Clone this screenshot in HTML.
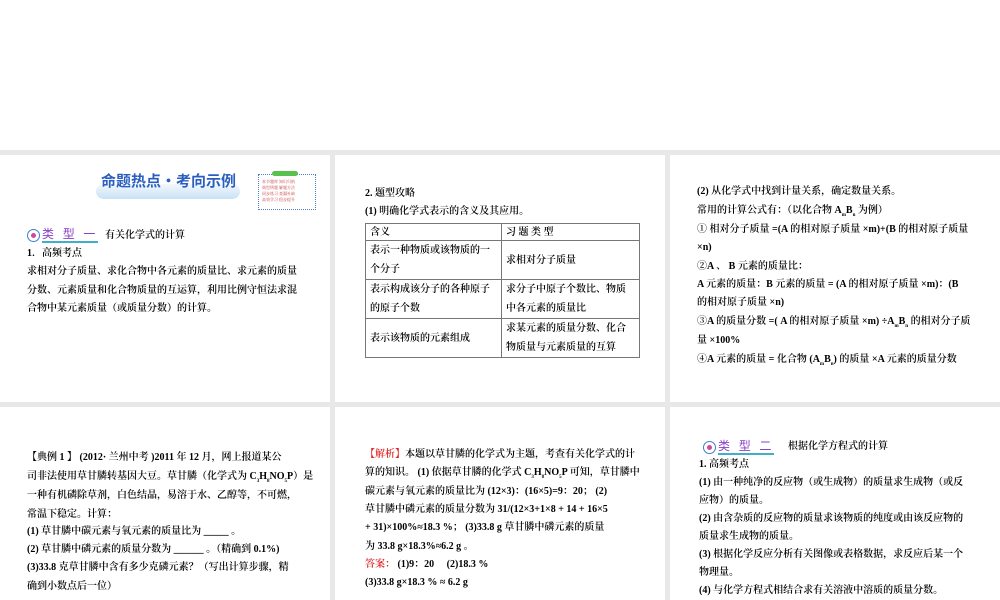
<!DOCTYPE html>
<html><head><meta charset="utf-8"><style>
body{margin:0;width:1000px;height:600px;background:#fff;position:relative;overflow:hidden;font-family:"Liberation Serif","Noto Serif CJK SC",serif;}
.bg{position:absolute;left:0;top:150px;width:1000px;height:450px;background:#e8e8e8;}
.s{position:absolute;background:#fff;}
.l{position:absolute;font-size:10px;color:#000;white-space:nowrap;font-weight:600;line-height:12px;}
table{position:absolute;border-collapse:collapse;font-size:10px;font-weight:600;color:#000;}
td{border:1px solid #777;padding:0 4px;line-height:19px;vertical-align:middle;}
.badge{position:absolute;height:14px;}
.badge .c{position:absolute;left:0;top:0;width:11px;height:11px;border:1.5px solid #3b7fd0;border-radius:50%;background:#fff;}
.badge .c:after{content:"";position:absolute;left:3px;top:3px;width:5px;height:5px;border-radius:50%;background:#d04a9a;}
.badge .t{position:absolute;left:15px;top:-2px;font-size:12px;color:#8a3fc8;font-family:"Noto Sans CJK SC",sans-serif;letter-spacing:3px;white-space:nowrap;border-bottom:2px solid #3fb0c8;line-height:14px;}
.red{color:#d22;}
</style></head><body>
<div class="bg"></div>
<div class="s" style="left:0;top:155px;width:330px;height:247px"></div>
<div class="s" style="left:335px;top:155px;width:330px;height:247px"></div>
<div class="s" style="left:670px;top:155px;width:330px;height:247px"></div>
<div class="s" style="left:0;top:407px;width:330px;height:193px"></div>
<div class="s" style="left:335px;top:407px;width:330px;height:193px"></div>
<div class="s" style="left:670px;top:407px;width:330px;height:193px"></div>

<!-- slide 1 -->
<div style="position:absolute;left:96px;top:184px;width:144px;height:15px;background:linear-gradient(#f2f8fd,#c9e2f5);border-radius:8px;"></div>
<div class="l" style="left:101px;top:172px;font-size:15px;line-height:18px;color:#2a5fc0;font-family:'Noto Sans CJK SC',sans-serif;font-weight:700;">命题热点·考向示例</div>
<div style="position:absolute;left:258px;top:174px;width:56px;height:34px;border:1px dotted #4a7fd0;"></div>
<div style="position:absolute;left:272px;top:171px;width:26px;height:5px;background:#5cc050;border-radius:3px;"></div>
<div class="l" style="left:262px;top:179px;font-size:4px;line-height:6px;color:#c44;font-weight:400;">本节题库 知识归纳<br>典型例题 解题方法<br>同步练习 查漏补缺<br>高效学习 稳步提升</div>
<div class="badge" style="left:27px;top:229px;"><div class="c"></div><div class="t">类 型 一</div></div>
<div class="l" style="left:105px;top:230px;">有关化学式的计算</div>
<div class="l" style="left:27px;top:248px;">1．高频考点</div>
<div class="l" style="left:27px;top:266px;">求相对分子质量、求化合物中各元素的质量比、求元素的质量</div>
<div class="l" style="left:27px;top:285px;">分数、元素质量和化合物质量的互运算，利用比例守恒法求混</div>
<div class="l" style="left:27px;top:303px;">合物中某元素质量（或质量分数）的计算。</div>

<!-- slide 2 -->
<div class="l" style="left:365px;top:188px;">2. 题型攻略</div>
<div class="l" style="left:365px;top:206px;">(1) 明确化学式表示的含义及其应用。</div>
<table style="left:365px;top:223px;width:275px;">
<tr style="height:17px"><td style="width:127px;line-height:15px">含义</td><td style="line-height:15px">习 题 类 型</td></tr>
<tr style="height:39px"><td>表示一种物质或该物质的一个分子</td><td>求相对分子质量</td></tr>
<tr style="height:39px"><td>表示构成该分子的各种原子的原子个数</td><td>求分子中原子个数比、物质中各元素的质量比</td></tr>
<tr style="height:39px"><td>表示该物质的元素组成</td><td>求某元素的质量分数、化合物质量与元素质量的互算</td></tr>
</table>

<!-- slide 3 -->
<div class="l" style="left:697px;top:186px;">(2) 从化学式中找到计量关系，确定数量关系。</div>
<div class="l" style="left:697px;top:205px;">常用的计算公式有：（以化合物 A<sub style="font-size:5px">m</sub>B<sub style="font-size:5px">n</sub> 为例）</div>
<div class="l" style="left:697px;top:224px;">① 相对分子质量 =(A 的相对原子质量 ×m)+(B 的相对原子质量</div>
<div class="l" style="left:697px;top:242px;">×n)</div>
<div class="l" style="left:697px;top:261px;">②A 、 B 元素的质量比：</div>
<div class="l" style="left:697px;top:279px;">A 元素的质量：B 元素的质量 = (A 的相对原子质量 ×m)：(B</div>
<div class="l" style="left:697px;top:297px;">的相对原子质量 ×n)</div>
<div class="l" style="left:697px;top:316px;">③A 的质量分数 =( A 的相对原子质量 ×m) ÷A<sub style="font-size:5px">m</sub>B<sub style="font-size:5px">n</sub> 的相对分子质</div>
<div class="l" style="left:697px;top:335px;">量 ×100%</div>
<div class="l" style="left:697px;top:354px;">④A 元素的质量 = 化合物 (A<sub style="font-size:5px">m</sub>B<sub style="font-size:5px">n</sub>) 的质量 ×A 元素的质量分数</div>

<!-- slide 4 -->
<div class="l" style="left:27px;top:452px;">【典例 1 】 (2012· 兰州中考 )2011 年 12 月，网上报道某公</div>
<div class="l" style="left:27px;top:471px;">司非法使用草甘膦转基因大豆。草甘膦（化学式为 C<sub style="font-size:5px">3</sub>H<sub style="font-size:5px">8</sub>NO<sub style="font-size:5px">5</sub>P）是</div>
<div class="l" style="left:27px;top:490px;">一种有机磷除草剂，白色结晶，易溶于水、乙醇等，不可燃，</div>
<div class="l" style="left:27px;top:509px;">常温下稳定。计算：</div>
<div class="l" style="left:27px;top:526px;">(1) 草甘膦中碳元素与氧元素的质量比为 _____ 。</div>
<div class="l" style="left:27px;top:544px;">(2) 草甘膦中磷元素的质量分数为 ______ 。（精确到 0.1%)</div>
<div class="l" style="left:27px;top:562px;">(3)33.8 克草甘膦中含有多少克磷元素？（写出计算步骤，精</div>
<div class="l" style="left:27px;top:581px;">确到小数点后一位）</div>

<!-- slide 5 -->
<div class="l" style="left:365px;top:449px;"><span class="red">【解析】</span>本题以草甘膦的化学式为主题，考查有关化学式的计</div>
<div class="l" style="left:365px;top:467px;">算的知识。 (1) 依据草甘膦的化学式 C<sub style="font-size:5px">3</sub>H<sub style="font-size:5px">8</sub>NO<sub style="font-size:5px">5</sub>P 可知，草甘膦中</div>
<div class="l" style="left:365px;top:486px;">碳元素与氧元素的质量比为 (12×3)：(16×5)=9：20； (2)</div>
<div class="l" style="left:365px;top:504px;">草甘膦中磷元素的质量分数为 31/(12×3+1×8 + 14 + 16×5</div>
<div class="l" style="left:365px;top:522px;">+ 31)×100%≈18.3 %； (3)33.8 g 草甘膦中磷元素的质量</div>
<div class="l" style="left:365px;top:541px;">为 33.8 g×18.3%≈6.2 g 。</div>
<div class="l" style="left:365px;top:559px;"><span class="red">答案：</span> (1)9：20 &nbsp;&nbsp;&nbsp;&nbsp;(2)18.3 %</div>
<div class="l" style="left:365px;top:577px;">(3)33.8 g×18.3 % ≈ 6.2 g</div>

<!-- slide 6 -->
<div class="badge" style="left:703px;top:441px;"><div class="c"></div><div class="t">类 型 二</div></div>
<div class="l" style="left:788px;top:441px;">根据化学方程式的计算</div>
<div class="l" style="left:699px;top:459px;">1. 高频考点</div>
<div class="l" style="left:699px;top:477px;">(1) 由一种纯净的反应物（或生成物）的质量求生成物（或反</div>
<div class="l" style="left:699px;top:495px;">应物）的质量。</div>
<div class="l" style="left:699px;top:513px;">(2) 由含杂质的反应物的质量求该物质的纯度或由该反应物的</div>
<div class="l" style="left:699px;top:531px;">质量求生成物的质量。</div>
<div class="l" style="left:699px;top:549px;">(3) 根据化学反应分析有关图像或表格数据，求反应后某一个</div>
<div class="l" style="left:699px;top:567px;">物理量。</div>
<div class="l" style="left:699px;top:585px;">(4) 与化学方程式相结合求有关溶液中溶质的质量分数。</div>
</body></html>
